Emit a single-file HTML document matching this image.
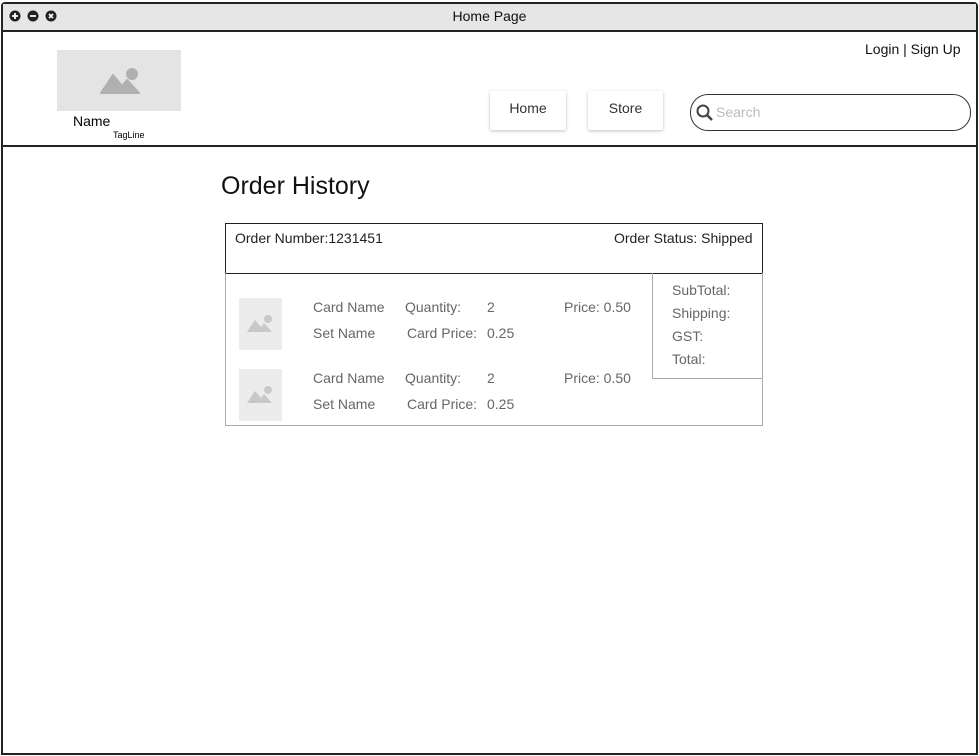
<!DOCTYPE html><html><head><style>
body{margin:0;width:979px;height:756px;position:relative;overflow:hidden;font-family:"Liberation Sans",sans-serif;background:#fff}
.a{position:absolute;white-space:nowrap;line-height:16px}
.g{color:#666;font-size:14px}
.img{position:absolute;background:#ececec;width:43px;height:52px}
.btn{position:absolute;background:#fff;box-shadow:0 1px 3px rgba(0,0,0,.25);border-radius:2px;font-size:14px;color:#333;text-align:center;line-height:36px}
</style></head><body>
<div style="position:absolute;left:1px;top:2px;width:973px;height:749px;border:2px solid #222;border-radius:4px 4px 0 0"></div>
<div style="position:absolute;left:3px;top:4px;width:973px;height:26px;background:#e6e6e6;border-bottom:2px solid #222"></div>
<div class="a" style="left:0;width:979px;text-align:center;top:8px;font-size:14px;color:#111">Home Page</div>
<svg style="position:absolute;left:9px;top:10px" width="50" height="12"><g fill="#222"><circle cx="6" cy="6" r="5.5"/><circle cx="24" cy="6" r="5.5"/><circle cx="42" cy="6" r="5.5"/></g><g stroke="#fff" stroke-width="1.8"><path d="M3 6h6M6 3v6M21 6h6M40 4l4 4M44 4l-4 4"/></g></svg>
<div style="position:absolute;left:3px;top:145px;width:973px;height:2px;background:#222"></div>
<div style="position:absolute;left:57px;top:50px;width:124px;height:61px;background:#e4e4e4"></div>
<svg style="position:absolute;left:100px;top:67px" width="40" height="28"><circle cx="32" cy="7" r="6" fill="#b0b0b0"/><path d="M1 26 L13 8 L22 19 L27 13 L39 26 Z" fill="#b0b0b0" stroke="#b0b0b0" stroke-linejoin="round" stroke-width="2"/></svg>
<div class="a" style="left:73px;top:113px;font-size:14px">Name</div>
<div class="a" style="left:113px;top:130px;font-size:9px;line-height:11px">TagLine</div>
<div class="a" style="left:865px;top:41px;font-size:14px;color:#111">Login | Sign Up</div>
<div class="btn" style="left:490px;top:91px;width:76px;height:39px;line-height:34px">Home</div>
<div class="btn" style="left:588px;top:91px;width:75px;height:39px;line-height:34px">Store</div>
<div style="position:absolute;left:690px;top:94px;width:279px;height:35px;border:1.5px solid #333;border-radius:18px"></div>
<svg style="position:absolute;left:695px;top:103px" width="20" height="20"><circle cx="8" cy="8" r="5.5" fill="none" stroke="#444" stroke-width="2"/><path d="M12 12l5 5" stroke="#444" stroke-width="2.5"/></svg>
<div class="a" style="left:716px;top:104px;font-size:14px;color:#bbb">Search</div>
<div class="a" style="left:221px;top:172px;font-size:25px;line-height:28px;color:#111">Order History</div>
<div style="position:absolute;left:225px;top:223px;width:536px;height:49px;border:1px solid #222"></div>
<div class="a" style="left:235px;top:230px;font-size:14px;color:#222">Order Number:1231451</div>
<div class="a" style="left:614px;top:230px;font-size:14px;color:#222">Order Status: Shipped</div>
<div style="position:absolute;left:225px;top:273px;width:536px;height:152px;border:1px solid #aaa;border-top:none"></div>
<div style="position:absolute;left:652px;top:273px;width:109px;height:105px;border-left:1px solid #aaa;border-bottom:1px solid #aaa"></div>
<div class="a g" style="left:672px;top:282px">SubTotal:</div>
<div class="a g" style="left:672px;top:305px">Shipping:</div>
<div class="a g" style="left:672px;top:328px">GST:</div>
<div class="a g" style="left:672px;top:351px">Total:</div>
<div class="img" style="left:239px;top:298px"></div>
<div class="img" style="left:239px;top:369px"></div>
<svg style="position:absolute;left:246px;top:314px" width="28" height="20"><circle cx="22" cy="5" r="4" fill="#c8c8c8"/><path d="M1 18 L9 6 L15 13 L18 9 L26 18Z" fill="#c8c8c8"/></svg>
<svg style="position:absolute;left:246px;top:385px" width="28" height="20"><circle cx="22" cy="5" r="4" fill="#c8c8c8"/><path d="M1 18 L9 6 L15 13 L18 9 L26 18Z" fill="#c8c8c8"/></svg>
<div class="a g" style="left:313px;top:299px">Card Name</div><div class="a g" style="left:405px;top:299px">Quantity:</div><div class="a g" style="left:487px;top:299px">2</div><div class="a g" style="left:564px;top:299px">Price: 0.50</div>
<div class="a g" style="left:313px;top:325px">Set Name</div><div class="a g" style="left:407px;top:325px">Card Price:</div><div class="a g" style="left:487px;top:325px">0.25</div>
<div class="a g" style="left:313px;top:370px">Card Name</div><div class="a g" style="left:405px;top:370px">Quantity:</div><div class="a g" style="left:487px;top:370px">2</div><div class="a g" style="left:564px;top:370px">Price: 0.50</div>
<div class="a g" style="left:313px;top:396px">Set Name</div><div class="a g" style="left:407px;top:396px">Card Price:</div><div class="a g" style="left:487px;top:396px">0.25</div>
</body></html>
